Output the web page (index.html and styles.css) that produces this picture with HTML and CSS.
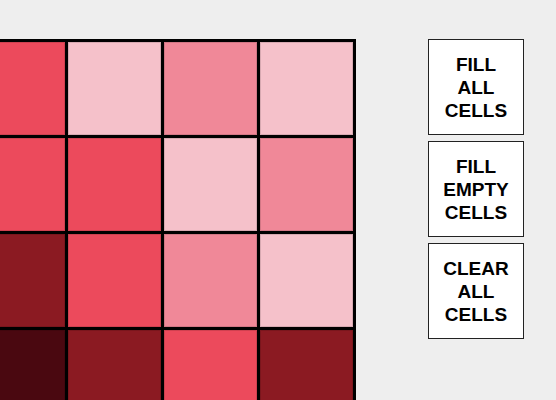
FILE: index.html
```html
<!DOCTYPE html>
<html lang="en">
<head>
    <meta charset="UTF-8">
    <meta name="viewport" content="width=device-width, initial-scale=1.0">
    <title>Cell Painter</title>
    <link rel="stylesheet" href="styles.css">
</head>
<body>
    <div id="main">
        <div class="board">
            <div class="cell shade2"></div>
            <div class="cell shade0"></div>
            <div class="cell shade1"></div>
            <div class="cell shade0"></div>

            <div class="cell shade2"></div>
            <div class="cell shade2"></div>
            <div class="cell shade0"></div>
            <div class="cell shade1"></div>

            <div class="cell shade3"></div>
            <div class="cell shade2"></div>
            <div class="cell shade1"></div>
            <div class="cell shade0"></div>

            <div class="cell shade4"></div>
            <div class="cell shade3"></div>
            <div class="cell shade2"></div>
            <div class="cell shade3"></div>
        </div>
        <div class="controls">
            <button class="control">FILL<br>ALL<br>CELLS</button>
            <button class="control">FILL<br>EMPTY<br>CELLS</button>
            <button class="control">CLEAR<br>ALL<br>CELLS</button>
        </div>
    </div>
</body>
</html>
```

FILE: styles.css
```css
html, body{
    margin: 0;
    height: 100%;
    overflow: hidden;
    background-color: #eeeeee;
    font-family: "Liberation Sans", Arial, sans-serif;
}
#main{
    display: flex;
    align-items: flex-start;
    gap: 72px;
    padding-top: 39px;
}
.board{
    margin-left: -31px;
    display: grid;
    grid-template-columns: repeat(4, 93px);
    grid-auto-rows: 93px;
    gap: 3px;
    padding: 3px;
    background-color: #000;
    flex-shrink: 0;
}
.cell{
    box-sizing: border-box;
    border: 1px solid rgba(0, 0, 0, 0.12);
}
.shade0{ background-color: #f5c1ca; }
.shade1{ background-color: #f08898; }
.shade2{ background-color: #ec4a5c; }
.shade3{ background-color: #8b1a22; }
.shade4{ background-color: #4a0810; }

.controls{
    display: flex;
    flex-direction: column;
    gap: 6px;
}
.control{
    width: 96px;
    height: 96px;
    margin: 0;
    padding: 0;
    background-color: #fff;
    border: 1px solid #222;
    font-family: "Liberation Sans", Arial, sans-serif;
    font-weight: bold;
    font-size: 19px;
    line-height: 23px;
    color: #000;
    text-align: center;
}
```
